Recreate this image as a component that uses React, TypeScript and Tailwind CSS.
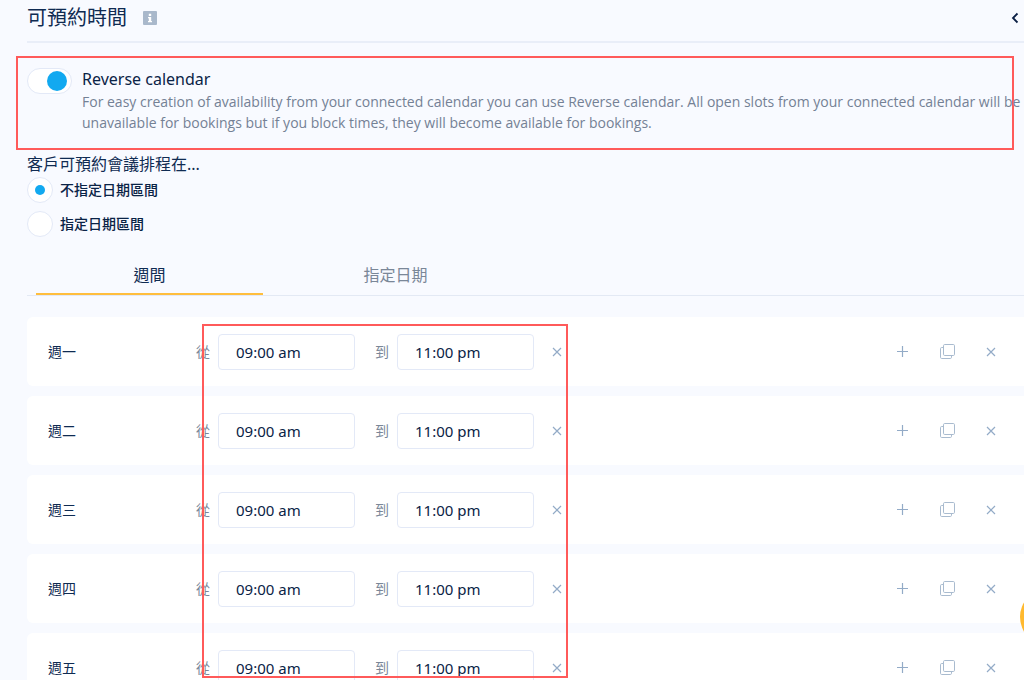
import { useState } from "react";

const days = ["週一", "週二", "週三", "週四", "週五"];

function InfoIcon() {
  return (
    <svg width="14" height="14" viewBox="0 0 14 14" aria-hidden="true">
      <rect width="14" height="14" rx="1" fill="#a9b8cb" />
      <path d="M5.8 2.8h2.4v2.2H5.8zM5 6h3.2v4H9v1.2H5V10h.8V7.2H5z" fill="#fff" />
    </svg>
  );
}

function ChevronLeftIcon() {
  return (
    <svg width="8" height="12" viewBox="0 0 8 12" fill="none" stroke="#0a1f44" strokeWidth="1.8" aria-hidden="true">
      <path d="M6.5 1.5 2 6l4.5 4.5" />
    </svg>
  );
}

function CloseIcon() {
  return (
    <svg width="10" height="10" viewBox="0 0 10 10" fill="none" stroke="#93abc7" strokeWidth="1.2" aria-hidden="true">
      <path d="M1 1l8 8M9 1 1 9" />
    </svg>
  );
}

function PlusIcon() {
  return (
    <svg width="12" height="12" viewBox="0 0 12 12" fill="none" stroke="#93abc7" strokeWidth="1.2" aria-hidden="true">
      <path d="M5.5 0v11M0 5.5h11" />
    </svg>
  );
}

function CopyIcon() {
  return (
    <svg width="15" height="15" viewBox="0 0 15 15" fill="none" stroke="#a9bbcf" aria-hidden="true">
      <rect x="3.5" y="0.5" width="11" height="11" rx="1.2" />
      <path d="M3.5 3.5H1.7A1.2 1.2 0 0 0 .5 4.7v8.6a1.2 1.2 0 0 0 1.2 1.2h8.6a1.2 1.2 0 0 0 1.2-1.2v-1.8" />
    </svg>
  );
}

const iconButton = "flex size-6 items-center justify-center";
const timeField =
  "h-9 w-[137px] rounded border border-[#e3e9f7] bg-white px-[17px] text-[15px] text-[#0a2346] outline-none";

function DayRow({ day }: { day: string }) {
  return (
    <li className="flex h-[69px] items-center rounded-l-md bg-white pr-[21px] pl-[21px]">
      <span className="w-[148px] text-sm text-[#0f2b52]">{day}</span>
      <label className="flex items-center gap-2 text-sm text-[#7a8798]">
        從
        <input type="text" defaultValue="09:00 am" className={timeField} />
      </label>
      <label className="ml-5 flex items-center gap-2 text-sm text-[#7a8798]">
        到
        <input type="text" defaultValue="11:00 pm" className={timeField} />
      </label>
      <button type="button" aria-label="Remove" className="ml-[11px] flex size-6 items-center justify-center">
        <CloseIcon />
      </button>
      <div className="ml-auto flex gap-5">
        <button type="button" aria-label="Add" className={iconButton}>
          <PlusIcon />
        </button>
        <button type="button" aria-label="Copy" className={iconButton}>
          <CopyIcon />
        </button>
        <button type="button" aria-label="Clear" className={iconButton}>
          <CloseIcon />
        </button>
      </div>
    </li>
  );
}

function RangeOption({ label, checked, onSelect }: { label: string; checked: boolean; onSelect: () => void }) {
  return (
    <label className="flex items-center gap-[7px] text-sm font-medium text-[#0a2346]">
      <input
        type="radio"
        name="range"
        checked={checked}
        onChange={onSelect}
        className="grid size-[26px] appearance-none place-items-center rounded-full border border-[#e3e9f7] bg-white before:size-[10px] before:rounded-full checked:before:bg-[#12a9f0]"
      />
      {label}
    </label>
  );
}

export default function App() {
  const [reverse, setReverse] = useState(true);
  const [limited, setLimited] = useState(false);

  return (
    <main className="relative h-screen overflow-hidden bg-[#f8faff] pl-[27px] font-['Noto_Sans','Noto_Sans_CJK_TC',sans-serif] text-[#0a2346]">
      <header className="flex h-[43px] items-center border-b-2 border-[#e9eef8] pr-[5px] pb-1.5">
        <h1 className="text-xl leading-7 text-[#0f2b52]">可預約時間</h1>
        <button type="button" aria-label="Info" className="ml-4">
          <InfoIcon />
        </button>
        <button type="button" aria-label="Back" className="ml-auto">
          <ChevronLeftIcon />
        </button>
      </header>

      <section className="mt-[13px] mr-[10px] -ml-[11px] flex gap-[10px] border-2 border-[#ff5a5a] pt-[9px] pb-[15px] pl-[9px]">
        <input
          id="reverse"
          type="checkbox"
          role="switch"
          checked={reverse}
          onChange={(e) => setReverse(e.target.checked)}
          className="mt-px flex h-[26px] w-[45px] shrink-0 appearance-none items-center rounded-full border border-[#e3e9f7] bg-white px-1 before:size-5 before:rounded-full before:bg-[#a9b8cb] checked:justify-end checked:before:bg-[#12a9f0]"
        />
        <div>
          <label htmlFor="reverse" className="block text-base leading-6">
            Reverse calendar
          </label>
          <p className="-mr-3 font-['Open_Sans',sans-serif] text-sm leading-[21px] text-[#748195]">
            For easy creation of availability from your connected calendar you can use Reverse calendar. All open slots
            from your connected calendar will be unavailable for bookings but if you block times, they will become
            available for bookings.
          </p>
        </div>
      </section>

      <fieldset className="mt-0.5">
        <legend className="text-base leading-6 text-[#0f2b52]">客戶可預約會議排程在...</legend>
        <div className="mt-px flex flex-col gap-2">
          <RangeOption label="不指定日期區間" checked={!limited} onSelect={() => setLimited(false)} />
          <RangeOption label="指定日期區間" checked={limited} onSelect={() => setLimited(true)} />
        </div>
      </fieldset>

      <div role="tablist" className="mt-[18px] flex gap-[19px] border-b border-[#e3e9f4] pl-[9px]">
        <button
          type="button"
          role="tab"
          aria-selected="true"
          className="h-10 w-[227px] border-b-2 border-[#ffbe3d] pt-0.5 text-base text-[#0f2b52]"
        >
          週間
        </button>
        <button
          type="button"
          role="tab"
          aria-selected="false"
          className="h-10 w-[227px] border-b-2 border-transparent pt-0.5 text-base text-[#7a8798]"
        >
          指定日期
        </button>
      </div>

      <div className="relative mt-[21px]">
        <ul className="flex flex-col gap-[10px]">
          {days.map((day) => (
            <DayRow key={day} day={day} />
          ))}
        </ul>
        <div className="pointer-events-none absolute top-[7px] left-[175px] h-[354px] w-[366px] border-2 border-[#ff5a5a]" />
      </div>

      <button
        type="button"
        aria-label="Chat"
        className="absolute top-[589px] -right-[52px] size-14 rounded-full bg-[#ffb92e]"
      />
    </main>
  );
}
